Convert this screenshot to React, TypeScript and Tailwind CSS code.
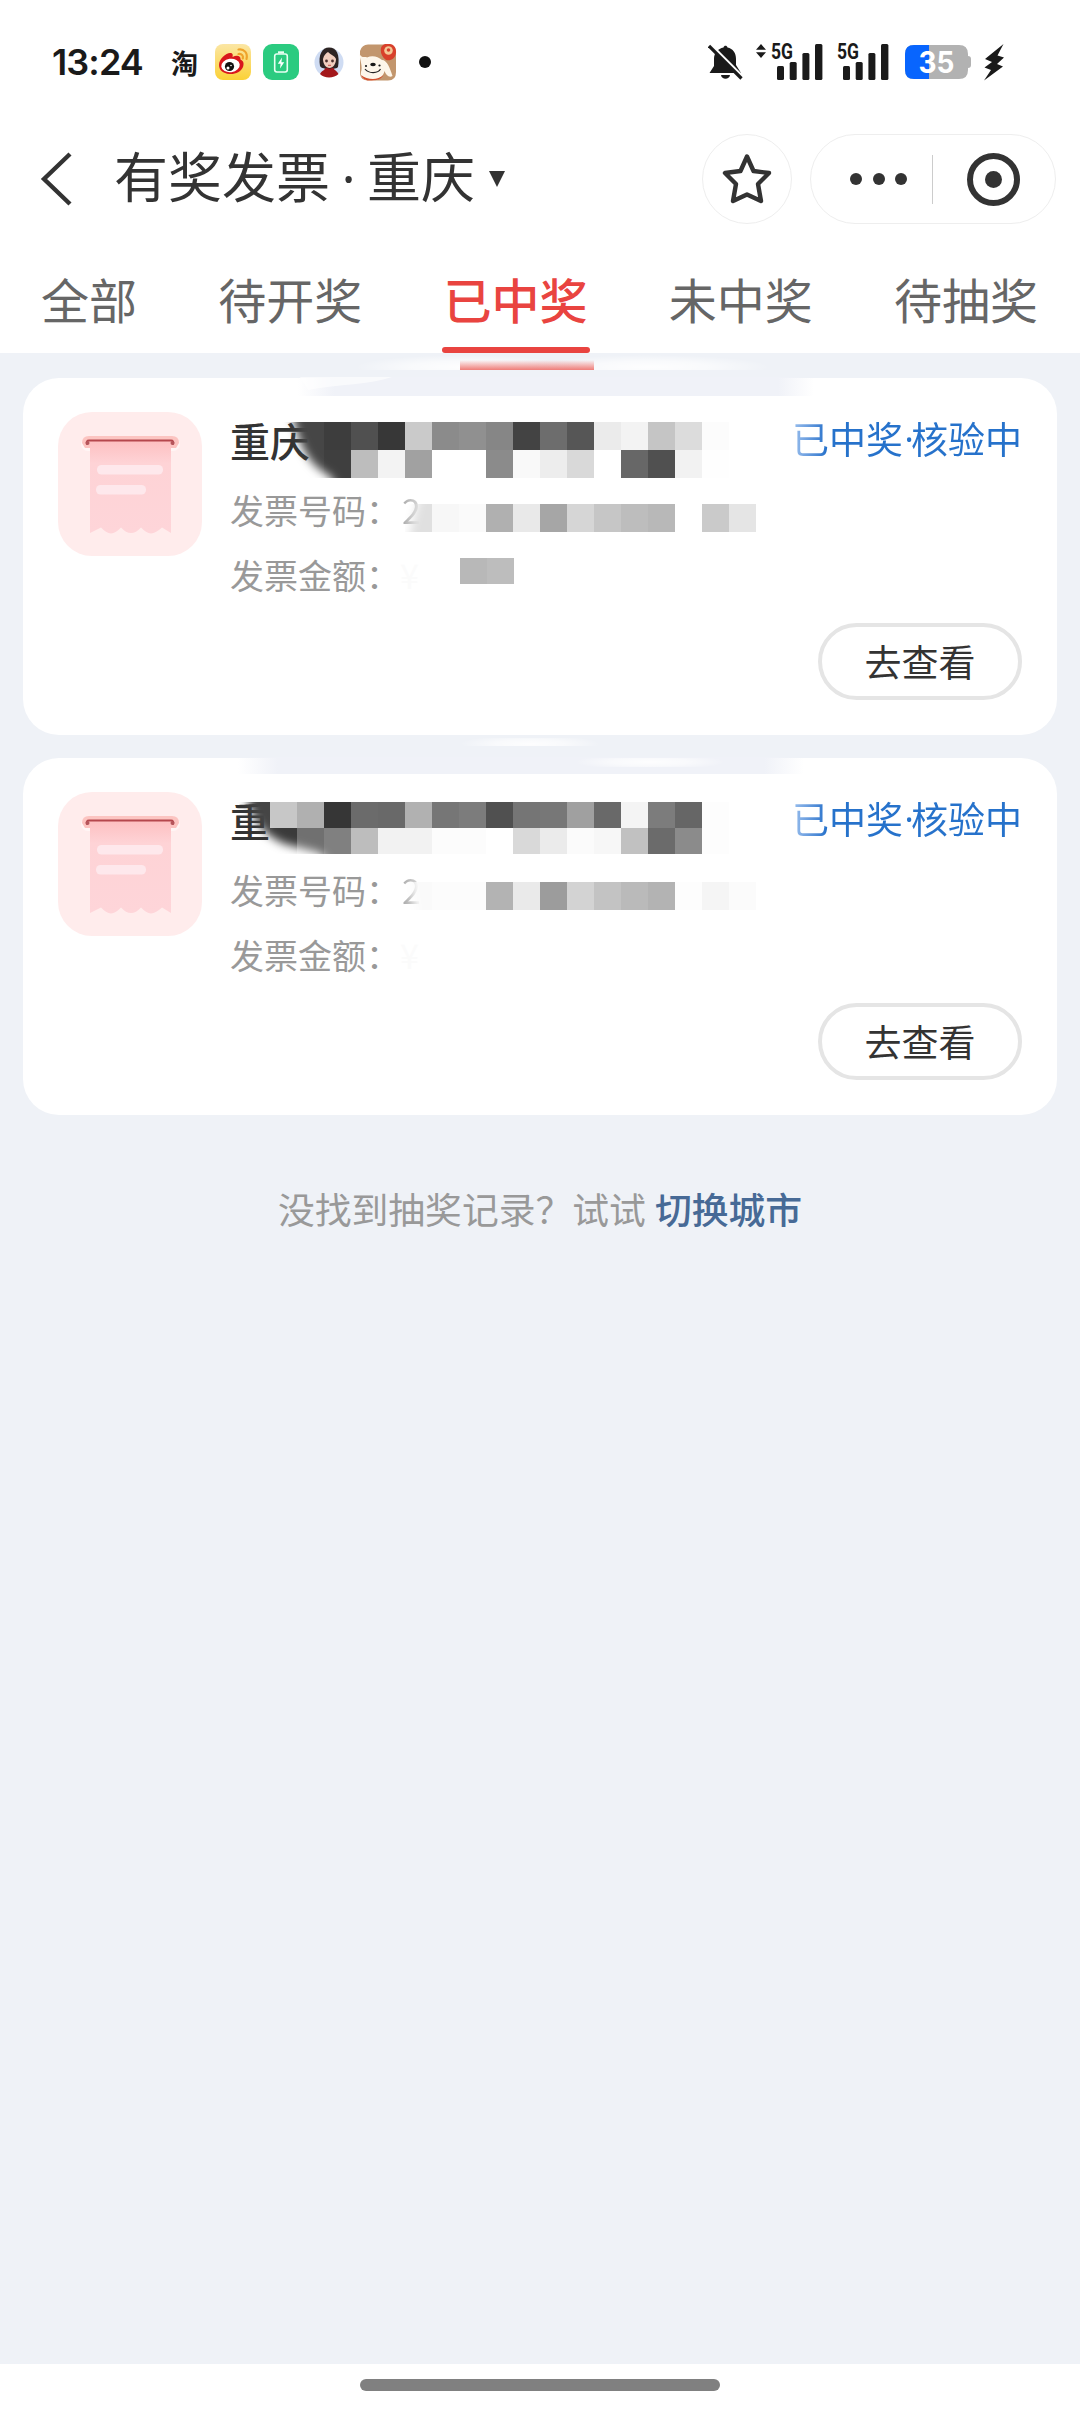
import clsx from "clsx";

type Cell = [x: number, color: string];

interface MosaicRow {
  y: number;
  h: number;
  cells: Cell[];
}

interface Invoice {
  title: string;
  number: string;
  amount: string;
}

const tabs = ["全部", "待开奖", "已中奖", "未中奖", "待抽奖"];
const activeTab = "已中奖";

const invoices: Invoice[] = [
  { title: "重庆", number: "2", amount: "¥" },
  { title: "重", number: "2", amount: "¥" },
];

const row = (y: number, h: number, start: number, colors: string): MosaicRow => ({
  y,
  h,
  cells: colors
    .split(" ")
    .map((c, i): Cell => [start + i * 27, `#${c}${c}${c}`])
    .filter(([, color]) => color !== "#ffffff"),
});

// Each value is the grey level of one 27px tile
const firstName = [
  row(422, 28, 270, "48 46 3d 50 37 ca 8b 90 86 43 6d 56 eb f3 c5 dc fc"),
  row(450, 28, 270, "48 46 3f bd f3 a1 ff ff 8b f9 ed d9 ff 67 50 f2 fe"),
];
const secondName = [
  row(802, 26, 216, "45 45 c7 b0 36 6b 69 b1 76 7c 50 75 77 a0 69 f4 7c 66 fd"),
  row(828, 26, 243, "45 3a 70 80 bd f2 f2 fc fc ff d9 eb fb f7 c1 6b 8b fd"),
];
const numbers = [
  row(504, 28, 405, "e0 f7 fa b0 e9 a6 d6 c6 bd b8 ff ca e5"),
  row(882, 28, 405, "fa fc fc b3 ea 9c d3 c3 ba b3 fd f5 fb"),
  row(558, 26, 460, "b8 bd"),
];

const Tiles = ({ rows }: { rows: MosaicRow[] }) => (
  <>
    {rows.map((r) =>
      r.cells.map(([x, color]) => (
        <rect key={`${r.y}-${x}`} x={x} y={r.y} width="27" height={r.h} fill={color} />
      ))
    )}
  </>
);

const RedactionLayer = () => (
  <svg
    className="pointer-events-none absolute left-0 top-0"
    width="1080"
    height="800"
    viewBox="0 353 1080 800"
  >
    <defs>
      <filter id="soft" x="-20%" y="-20%" width="140%" height="140%">
        <feGaussianBlur stdDeviation="5" />
      </filter>
      <linearGradient id="redFade" x1="0" y1="0" x2="0" y2="1">
        <stop offset="0" stopColor="#ef6f6a" stopOpacity="0" />
        <stop offset="1" stopColor="#ee7772" stopOpacity="0.95" />
      </linearGradient>
      <radialGradient id="whiteGlow">
        <stop offset="0" stopColor="#fff" stopOpacity="0.9" />
        <stop offset="0.5" stopColor="#fff" stopOpacity="0.6" />
        <stop offset="1" stopColor="#fff" stopOpacity="0" />
      </radialGradient>
      <linearGradient id="stripFade" x1="0" y1="0" x2="1" y2="0">
        <stop offset="0" stopColor="#f0f2f8" stopOpacity="0" />
        <stop offset="0.07" stopColor="#f0f2f8" />
        <stop offset="0.93" stopColor="#f0f2f8" />
        <stop offset="1" stopColor="#f0f2f8" stopOpacity="0" />
      </linearGradient>
      <mask id="nameMask1" maskUnits="userSpaceOnUse" x="0" y="400" width="1080" height="100">
        <path
          d="M288 390 C296 440 304 462 330 476 L345 500 H1080 V390 Z"
          fill="#fff"
          filter="url(#soft)"
        />
      </mask>
      <mask id="nameMask2" maskUnits="userSpaceOnUse" x="0" y="780" width="1080" height="90">
        <path
          d="M242 770 C248 812 256 832 285 844 L320 853 L345 880 H1080 V770 Z"
          fill="#fff"
          filter="url(#soft)"
        />
      </mask>
      <mask id="numberMask" maskUnits="userSpaceOnUse" x="0" y="490" width="1080" height="440">
        <path d="M424 480 L408 540 V860 L420 930 H1080 V480 Z" fill="#fff" filter="url(#soft)" />
      </mask>
      <clipPath id="glowClip">
        <rect x="300" y="354" width="520" height="16" />
        <rect x="420" y="738" width="200" height="8" />
        <rect x="540" y="758" width="220" height="9" />
      </clipPath>
    </defs>

    {/* Smudges around the top edges of the cards */}
    <rect x="298" y="377" width="516" height="19" fill="url(#stripFade)" />
    <path d="M300 377 H392 C370 385 340 384 308 390 Z" fill="#fff" opacity="0.6" />
    <rect x="238" y="757" width="566" height="17" fill="url(#stripFade)" />
    <g clipPath="url(#glowClip)">
      <ellipse cx="465" cy="367" rx="110" ry="12" fill="url(#whiteGlow)" />
      <ellipse cx="650" cy="367" rx="120" ry="12" fill="url(#whiteGlow)" />
      <ellipse cx="530" cy="744" rx="70" ry="9" fill="url(#whiteGlow)" />
      <ellipse cx="650" cy="762" rx="75" ry="8" fill="url(#whiteGlow)" />
    </g>
    <rect x="460" y="360" width="134" height="10" fill="url(#redFade)" />

    <g mask="url(#nameMask1)">
      <Tiles rows={firstName} />
    </g>
    <g mask="url(#nameMask2)">
      <Tiles rows={secondName} />
    </g>
    <g mask="url(#numberMask)">
      <Tiles rows={numbers} />
    </g>
  </svg>
);

const SignalBars = () => (
  <g fill="#1a1a1a">
    <rect x="6" y="23" width="7" height="14" rx="1.5" />
    <rect x="18.7" y="19" width="7" height="18" rx="1.5" />
    <rect x="31.4" y="10" width="7" height="27" rx="1.5" />
    <rect x="44" y="1" width="7.4" height="36" rx="1.5" />
    <text
      x="0"
      y="16.3"
      fontFamily="Roboto, sans-serif"
      fontWeight="700"
      fontSize="22"
      textLength="22"
      lengthAdjust="spacingAndGlyphs"
    >
      5G
    </text>
  </g>
);

const StatusBar = () => (
  <div className="flex h-[124px] items-center pl-[52px] pr-[75px] text-[#1a1a1a]">
    <span className="w-[92px] whitespace-nowrap font-[Inter,sans-serif] text-[36px] font-semibold leading-none tracking-[-0.9px]">
      13:24
    </span>
    <span className="ml-[27px] w-[28px] text-[27px] font-bold leading-none">淘</span>

    {/* Weibo */}
    <svg className="ml-[16px]" width="36" height="36" viewBox="0 0 36 36">
      <defs>
        <linearGradient id="weiboBg" x1="0" y1="0" x2="0" y2="1">
          <stop offset="0" stopColor="#fbe6a4" />
          <stop offset="1" stopColor="#fbd136" />
        </linearGradient>
      </defs>
      <rect width="36" height="36" rx="8" fill="url(#weiboBg)" />
      <path
        d="M4 21 C4 15 11 9 15 9 C18 9 18 11 17.500 13 C21 11 26 11 25.500 15.500 C29 17 29 20 28 23 C26 28 20 30.500 14.500 30 C8 29.500 4 26 4 21Z"
        fill="#d9171d"
      />
      <ellipse cx="15.500" cy="21.500" rx="9.300" ry="6.700" fill="#fff" transform="rotate(-8 15.500 21.500)" />
      <circle cx="14.500" cy="22.500" r="4.600" fill="#111" />
      <circle cx="13" cy="24" r="1.500" fill="#fff" />
      <circle cx="16" cy="21.500" r="0.800" fill="#fff" />
      <path d="M23.500 5.500 C29 4.500 33 9 31.500 15 M23.500 10 C27 9.500 28.500 12 27.800 14.500" fill="none" stroke="#efa32b" strokeWidth="2.200" strokeLinecap="round" />
    </svg>

    {/* Battery app */}
    <svg className="ml-[12px]" width="36" height="36" viewBox="0 0 36 36">
      <rect width="36" height="36" rx="9" fill="#2bcb80" />
      <rect x="11.700" y="10" width="12.600" height="18" rx="2.200" fill="none" stroke="#e8fff2" strokeWidth="1.600" />
      <path d="M15 8.400 H21" stroke="#e8fff2" strokeWidth="2.200" />
      <path d="M19 13.500 L14.800 19.700 H17.600 L17 24.500 L21.200 18.300 H18.400 Z" fill="#fff" />
    </svg>

    {/* Avatar */}
    <svg className="ml-[15px]" width="30" height="32" viewBox="0 0 30 32">
      <circle cx="15" cy="16.500" r="14.500" fill="#cfdcf3" />
      <path d="M6 20 C4 9 8 1.500 15 1.500 C23 1.500 26 9 24 21 C22 24 8 24 6 20Z" fill="#2d2423" />
      <path d="M9 13 C10 9 12 7 14 6 C17 9 21 10 22 13 C22 18 19 22 15.500 22 C12 22 9 18 9 13Z" fill="#f0cdbd" />
      <circle cx="12.500" cy="15" r="1.400" fill="#4a2e2b" />
      <circle cx="18.500" cy="15" r="1.400" fill="#4a2e2b" />
      <path d="M14 19.300 H17" stroke="#c2504a" strokeWidth="1" />
      <path d="M6 28 C8 24.500 11 24 12 21.500 C14 23 17 23 19 21.500 C20 24 23 25 24.500 28 C20 32.500 10 32.500 6 28Z" fill="#a3171b" />
    </svg>

    {/* JD */}
    <svg className="ml-[15px]" width="38" height="37" viewBox="0 0 38 37">
      <path d="M1 7 Q3 0.500 9 0.500 H29 Q37 0.500 37 8.500 V28 Q37 36.500 29 36.500 H9 Q2 36.500 1 30Z" fill="#c2966d" />
      <path d="M0.500 10 C3 15 6 12 8 13.500 C14 11 19 13 23 16 C28 16 31 24 33.500 32 C30 34 27 31 25.500 27 C24 34 18 37 10 36.500 C4 36 1 32 2 28 C4 23 1 16 0.500 10Z" fill="#fdf6ea" />
      <path d="M2 31 C8 35.500 18 37 24.500 31 C22 35.500 18 36.500 10 36.500 C6 36.500 3 34 2 31Z" fill="#d2502d" />
      <ellipse cx="14" cy="20.500" rx="2.800" ry="1.800" fill="#181818" />
      <circle cx="7" cy="22" r="1.100" fill="#181818" />
      <circle cx="20.500" cy="21.500" r="1.100" fill="#181818" />
      <path d="M6 25 C10 30 19 29.500 21.500 25" fill="none" stroke="#222" strokeWidth="1.200" />
      <path d="M22 4 C23 0.500 27 -1 31 0 C35 0.500 37.500 4 37 9 C36 15 32 17 27 16 C23 13 21 8 22 4Z" fill="#d8402b" />
      <circle cx="29.500" cy="6.500" r="4.300" fill="#f4c795" />
      <circle cx="29.500" cy="6" r="1.800" fill="#d8402b" />
    </svg>
    <span className="ml-[22px] size-3 rounded-full bg-[#111]" />

    {/* Muted bell */}
    <svg className="ml-auto" width="36" height="37" viewBox="0 0 36 37">
      <path d="M1.500 29 L6 22 V15 C6 9 10 4.500 15.500 3.500 C16 1.300 19 1.300 19.500 3.500 C25 4.500 28 9 28 15 V21 L33 29Z" fill="#1a1a1a" />
      <path d="M13 31 H22 C21.500 36 13.500 36 13 31Z" fill="#1a1a1a" />
      <path d="M2.500 0.500 L35.500 33.500" stroke="#fff" strokeWidth="3" />
      <path d="M1 2 L33.500 34.500" stroke="#1a1a1a" strokeWidth="3.200" />
    </svg>

    <svg className="ml-[12px] overflow-visible" width="67" height="38" viewBox="-15 0 67 38">
      <path d="M-10 1 L-5 6.800 H-15Z M-10 15 L-5 9.200 H-15Z" fill="#1a1a1a" />
      <SignalBars />
    </svg>
    <svg className="ml-[14px] overflow-visible" width="53" height="38" viewBox="0 0 53 38">
      <SignalBars />
    </svg>

    {/* Battery */}
    <svg className="ml-[15px]" width="67" height="36" viewBox="0 0 67 36">
      <path d="M9 1 H54 Q63 1 63 10 V12 Q66 12 66 15 V21 Q66 24 63 24 V26 Q63 35 54 35 H9 Q0 35 0 26 V10 Q0 1 9 1Z" fill="#b2b2b2" />
      <path d="M9 1 H24 V35 H9 Q0 35 0 26 V10 Q0 1 9 1Z" fill="#0865fe" />
      <text
        x="13.500"
        y="28.500"
        fill="#fff"
        fontFamily="Inter, sans-serif"
        fontWeight="700"
        fontSize="30"
        textLength="36"
        lengthAdjust="spacingAndGlyphs"
      >
        35
      </text>
    </svg>
    <svg className="ml-[11px]" width="22" height="37" viewBox="0 0 22 37">
      <path d="M20.500 0 L2 15 L9 18 L1.500 23.500 L8 26 L1 36.500 L20 22.500 L14 20 L21 13.500 L14.500 11.500Z" fill="#1a1a1a" />
    </svg>
  </div>
);

const NavBar = () => (
  <div className="flex h-[110px] items-center pl-[40px] pr-[24px] text-[#333]">
    <svg width="32" height="54" viewBox="0 0 32 54">
      <path d="M30 2 L4 27 L30 52" fill="none" stroke="#333" strokeWidth="4.400" />
    </svg>
    <h1 className="-mt-[5px] ml-[42px] flex whitespace-nowrap text-[54px] font-normal leading-[60px]">
      <span>有奖发票</span>
      <span className="w-[37px] pt-[3px] text-center font-['Open_Sans',sans-serif]">·</span>
      <span>重庆</span>
    </h1>
    <svg className="ml-[14px]" width="16" height="16" viewBox="0 0 16 16">
      <path d="M0 0 H16 L8 16Z" fill="#333" />
    </svg>

    <button className="ml-auto flex size-[90px] items-center justify-center rounded-full border border-[#eeeeee]">
      <svg width="50" height="52" viewBox="0 0 50 52">
        <path
          d="M25 3.500 L31.500 18 L47 20 L36 31 L39 48 L25 41.500 L11 48 L14 31 L3 20 L18.500 18Z"
          fill="none"
          stroke="#333"
          strokeWidth="4.400"
          strokeLinejoin="round"
        />
      </svg>
    </button>
    <div className="ml-[18px] flex h-[90px] w-[246px] items-center rounded-full border border-[#eeeeee]">
      <div className="ml-[39px] flex gap-[10.5px]">
        <span className="size-3 rounded-full bg-[#333]" />
        <span className="size-3 rounded-full bg-[#333]" />
        <span className="size-3 rounded-full bg-[#333]" />
      </div>
      <span className="ml-[25px] h-[49px] w-px bg-[#cccccc]" />
      <span className="ml-[34px] flex size-[53px] items-center justify-center rounded-full border-[6px] border-[#333]">
        <span className="size-[17px] rounded-full bg-[#333]" />
      </span>
    </div>
  </div>
);

const TabBar = () => (
  <nav className="flex h-[119px] justify-between pl-[41px] pr-[42px]">
    {tabs.map((tab) => (
      <div
        key={tab}
        className={clsx(
          "flex flex-col justify-between pt-[34px] text-[48px] leading-[60px]",
          tab === activeTab ? "font-medium text-[#e94440]" : "text-[#666]"
        )}
      >
        <span>{tab}</span>
        {tab === activeTab && (
          <span className="-ml-[1px] -mr-[3px] h-[6px] rounded-full bg-[#e94440]" />
        )}
      </div>
    ))}
  </nav>
);

const ReceiptIcon = () => (
  <svg width="144" height="144" viewBox="0 0 144 144" className="shrink-0">
    <defs>
      <linearGradient id="paper" x1="0" y1="0" x2="0" y2="1">
        <stop offset="0" stopColor="#fdbfc0" />
        <stop offset="0.25" stopColor="#fed3d6" />
        <stop offset="1" stopColor="#fed5d9" />
      </linearGradient>
    </defs>
    <rect width="144" height="144" rx="34" fill="#ffecec" />
    <rect x="23" y="25" width="99" height="14" rx="7" fill="#fff6f5" />
    <path d="M24 31 Q24 24 31 24 H114 Q121 24 121 31 L118 36 H27Z" fill="#fcc4c1" />
    <path
      d="M32 28 H113 V121 L104 115.500 Q98 121 93 121.500 Q88 121 83 115.500 Q78 121 73 121 Q68 121 63 115.500 Q58 121 53 121.500 Q48 121 43 115.500 L32 121Z"
      fill="url(#paper)"
    />
    <path d="M29 32 Q28 28.500 31 28.500 H113 Q116 28.500 115 32" fill="none" stroke="#b5474d" strokeWidth="2" strokeLinecap="round" />
    <circle cx="29.500" cy="31" r="2" fill="#b5565b" />
    <circle cx="114.500" cy="31" r="2" fill="#b5565b" />
    <rect x="39" y="53" width="66" height="9.500" rx="4.500" fill="#fee8ec" />
    <rect x="38" y="73" width="50" height="9.500" rx="4.500" fill="#fee8ec" />
  </svg>
);

const InvoiceCard = ({ invoice }: { invoice: Invoice }) => (
  <article className="flex h-[357px] flex-col justify-between rounded-[36px] bg-white px-[35px] pb-[35px] pt-[34px]">
    <div className="flex">
      <ReceiptIcon />
      <div className="ml-[28px] flex-1">
        <div className="flex justify-between leading-[56px]">
          <h2 className="text-[40px] font-medium text-[#333]">{invoice.title}</h2>
          <span className="-mt-[2px] flex bg-linear-to-r from-[#9dc1ee] to-[#2672cb] to-15% bg-clip-text text-[37px] text-transparent">
            <span>已中奖</span>
            <span className="w-[8px] text-center font-['Open_Sans',sans-serif] tracking-[-4px]">·</span>
            <span>核验中</span>
          </span>
        </div>
        <div className="mt-[9px] text-[34px] leading-[65px] text-[#999]">
          <p>
            发票号码：
            <span className="ml-[2px] bg-linear-to-r from-[#aaa] to-[#ddd] bg-clip-text text-transparent">
              {invoice.number}
            </span>
          </p>
          <p>
            发票金额：<span className="text-[#fbfbfb]">{invoice.amount}</span>
          </p>
        </div>
      </div>
    </div>
    <button className="flex h-[77px] w-[204px] items-center justify-center self-end rounded-full border-4 border-[#e5e5e5] text-[37px] leading-none text-[#333]">
      去查看
    </button>
  </article>
);

const App = () => {
  return (
    <div
      lang="zh-CN"
      className="flex h-[2412px] w-[1080px] flex-col bg-white font-['Noto_Sans_CJK_SC',sans-serif]"
    >
      <header>
        <StatusBar />
        <NavBar />
        <TabBar />
      </header>

      <main className="relative flex-1 bg-[#eff2f7] px-[23px] pt-[25px]">
        <div className="flex flex-col gap-[23px]">
          {invoices.map((invoice, i) => (
            <InvoiceCard key={i} invoice={invoice} />
          ))}
        </div>
        <p className="mt-[65px] flex justify-center whitespace-nowrap text-[36.8px] leading-[56px] text-[#999]">
          没找到抽奖记录？试试
          <a className="ml-[9px] font-medium text-[#476a96]">切换城市</a>
        </p>
        <RedactionLayer />
      </main>

      {/* Gesture bar */}
      <footer className="flex h-[48px] justify-center pt-[15px]">
        <span className="h-3 w-[360px] rounded-full bg-[#808080]" />
      </footer>
    </div>
  );
};

export default App;
